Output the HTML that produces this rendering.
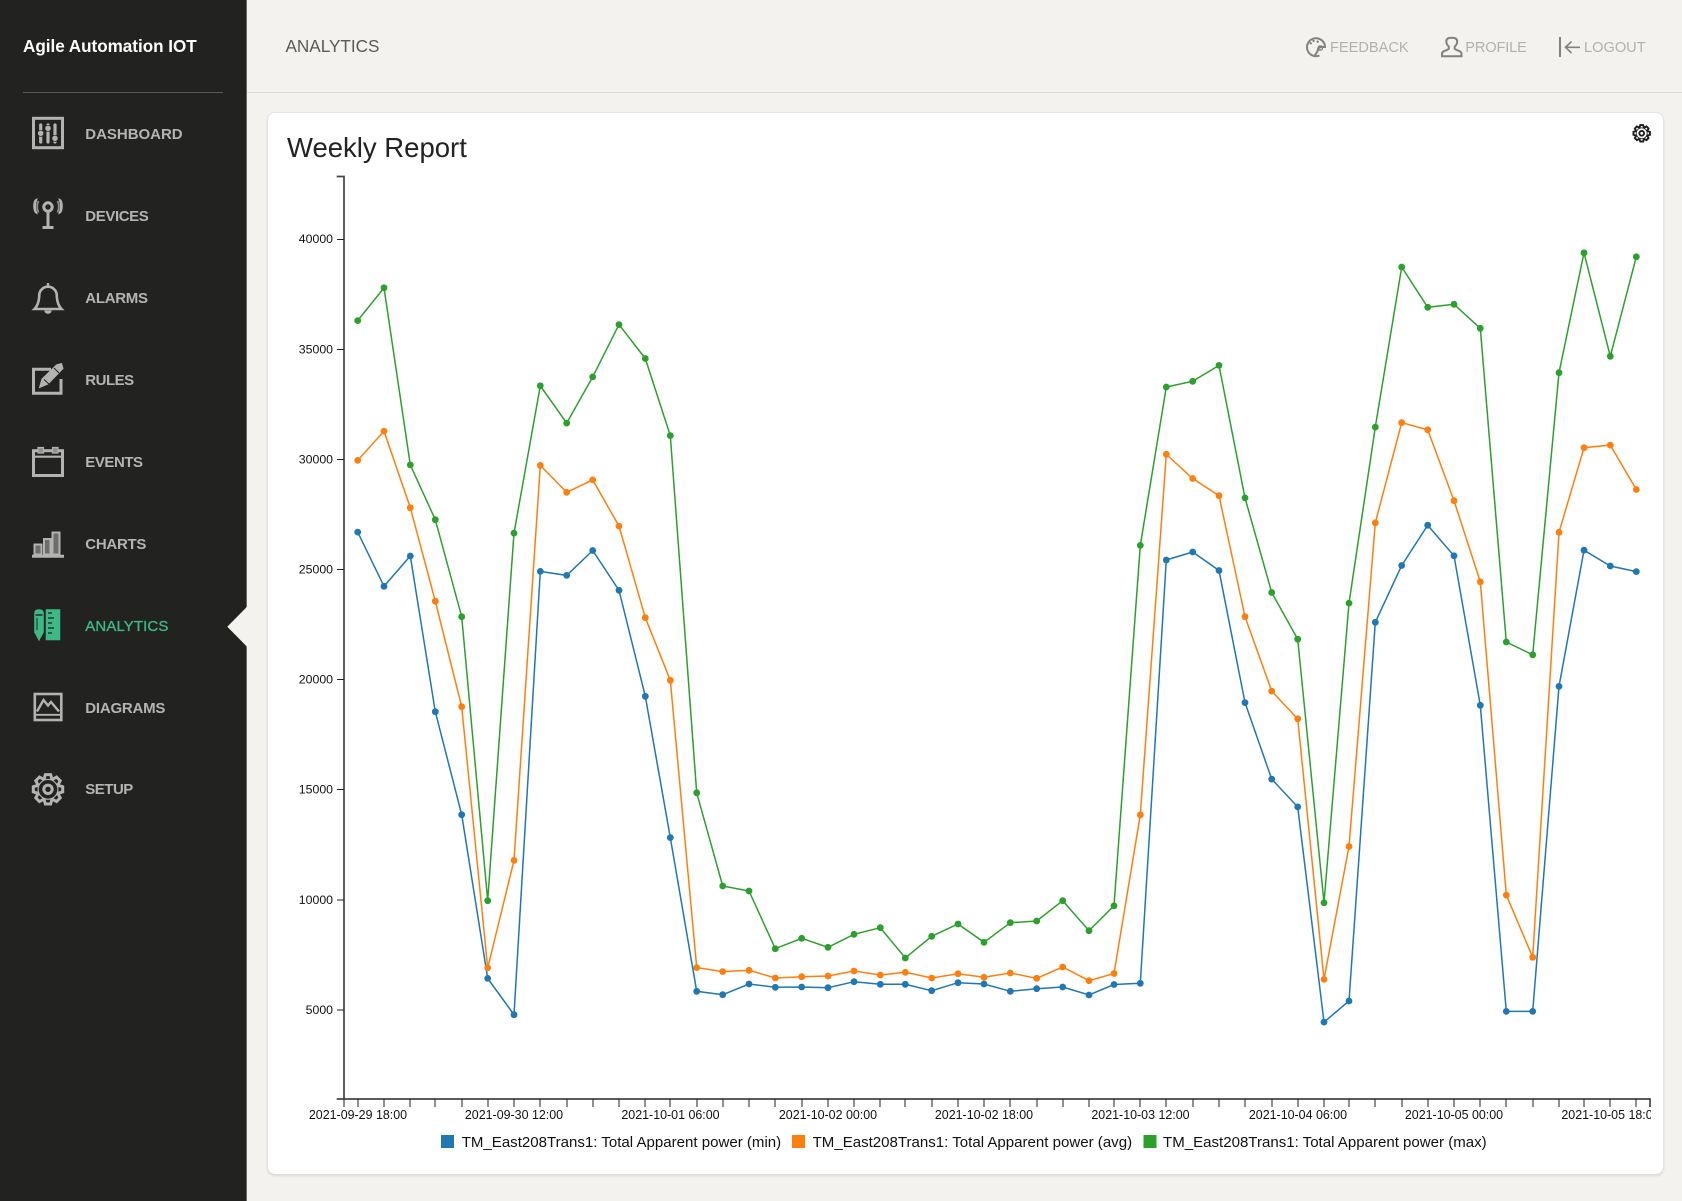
<!DOCTYPE html>
<html lang="en"><head><meta charset="utf-8"><title>Analytics</title>
<style>
*{box-sizing:border-box}
html,body{margin:0;padding:0;width:1682px;height:1201px;overflow:hidden;background:#f3f2ef;font-family:"Liberation Sans",Arial,sans-serif}
#side{position:absolute;left:0;top:0;width:247px;height:1201px;background:#222220;border-right:1px solid #6a6a68}
#logo{position:absolute;left:23px;top:36.8px;font-size:17.1px;line-height:20px;font-weight:700;color:#fff;white-space:nowrap;letter-spacing:-.02px}
#div{position:absolute;left:23px;top:92px;width:200px;height:1px;background:#5b5b59}
.nav{position:absolute;left:85.3px;font-size:15px;line-height:18px;font-weight:700;color:#b4b4b2;white-space:nowrap}
#hdr{position:absolute;left:247px;top:0;width:1435px;height:93px;border-bottom:1px solid #dcdcd9}
#ttl{position:absolute;left:285.5px;top:35.6px;font-size:17.15px;line-height:20px;color:#5a5a58;white-space:nowrap}
.top{position:absolute;top:38.6px;font-size:14.6px;line-height:18px;color:#b2b1ad;white-space:nowrap}
#card{position:absolute;left:267px;top:112px;width:1396.5px;height:1062px;background:#fff;border-radius:8px;border:1px solid #e4e4e1;border-bottom:0;box-shadow:0 2px 2px #dbdbd5}
#h{position:absolute;left:287px;top:131px;font-size:27.5px;line-height:34px;color:#222;white-space:nowrap}
svg{position:absolute;left:0;top:0}
</style></head><body>
<div id="hdr"></div>
<div id="side"></div>
<div id="logo">Agile Automation IOT</div>
<div id="div"></div>
<div class="nav" style="top:126px;letter-spacing:-.02px">DASHBOARD</div>
<div class="nav" style="top:208px;letter-spacing:-.4px">DEVICES</div>
<div class="nav" style="top:290px;letter-spacing:-.3px">ALARMS</div>
<div class="nav" style="top:372px;letter-spacing:-.5px">RULES</div>
<div class="nav" style="top:454px;letter-spacing:-.45px">EVENTS</div>
<div class="nav" style="top:536px;letter-spacing:-.28px">CHARTS</div>
<div class="nav" style="top:618px;color:#3cb984;font-weight:400;-webkit-text-stroke:.35px #3cb984;letter-spacing:.1px">ANALYTICS</div>
<div class="nav" style="top:700px;letter-spacing:-.22px">DIAGRAMS</div>
<div class="nav" style="top:781px;letter-spacing:-.5px">SETUP</div>
<div id="ttl">ANALYTICS</div>
<div class="top" style="left:1330px">FEEDBACK</div>
<div class="top" style="left:1465.3px;letter-spacing:-.15px">PROFILE</div>
<div class="top" style="left:1584px">LOGOUT</div>
<div id="card"></div>
<div id="h">Weekly Report</div>

<svg width="1682" height="1201" viewBox="0 0 1682 1201" xmlns="http://www.w3.org/2000/svg">
<defs>
<clipPath id="c"><rect x="280" y="1108" width="1371" height="24"/></clipPath>
<marker id="mb" markerUnits="userSpaceOnUse" markerWidth="8" markerHeight="8" refX="4" refY="4"><circle cx="4" cy="4" r="3.4" fill="#1f77b4"/></marker>
<marker id="mo" markerUnits="userSpaceOnUse" markerWidth="8" markerHeight="8" refX="4" refY="4"><circle cx="4" cy="4" r="3.4" fill="#ff7f0e"/></marker>
<marker id="mg" markerUnits="userSpaceOnUse" markerWidth="8" markerHeight="8" refX="4" refY="4"><circle cx="4" cy="4" r="3.4" fill="#2ca02c"/></marker>
<g id="tooth"><path d="M-3.9-10.4-2.6-14.7H2.6L3.9-10.4"/></g>
<g id="gear">
<circle r="10.8"/>
<use href="#tooth"/><use href="#tooth" transform="rotate(45)"/><use href="#tooth" transform="rotate(90)"/><use href="#tooth" transform="rotate(135)"/><use href="#tooth" transform="rotate(180)"/><use href="#tooth" transform="rotate(225)"/><use href="#tooth" transform="rotate(270)"/><use href="#tooth" transform="rotate(315)"/>
<circle r="4.2"/>
</g>
</defs>

<!-- active notch -->
<polygon points="247,606.7 227.3,626.7 247,646.7" fill="#f3f2ef"/>

<!-- sidebar icons -->
<g fill="none" stroke="#b3b3b1" stroke-width="3">
<!-- dashboard -->
<rect x="33.5" y="118.3" width="29" height="29.4"/>
<path d="M40.7 125V142M48 125V142M55 125V142" stroke-width="3.2" stroke-linecap="round"/>
<circle cx="40.7" cy="133.3" r="3.1" fill="#b3b3b1" stroke="#222220" stroke-width=".7"/>
<circle cx="48" cy="128.3" r="3.1" fill="#b3b3b1" stroke="#222220" stroke-width=".7"/>
<circle cx="55" cy="138.3" r="3.1" fill="#b3b3b1" stroke="#222220" stroke-width=".7"/>
<!-- devices -->
<circle cx="48" cy="207" r="4.2" stroke-width="3"/>
<path d="M48 211.5V228M42.5 227.5H53.5" stroke-width="3"/>
<path d="M38.5 201Q35.8 206.5 38.5 212.5M57.5 201Q60.2 206.5 57.5 212.5" stroke-width="1.8" stroke="#8f8f8d"/>
<path d="M34 206Q34 200.5 36.5 199.5Q33.8 207 36.5 213Q34 212 34 206ZM62 206Q62 200.5 59.5 199.5Q62.2 207 59.5 213Q62 212 62 206Z" stroke-width="1.6" fill="#b3b3b1"/>
<!-- alarm -->
<path d="M34.5 309Q38.5 305 39.2 297V295.5A8.8 8.8 0 0 1 56.8 295.5V297Q57.5 305 61.5 309Z" stroke-width="2.6"/>
<path d="M48 283V286.5" stroke-width="2.4"/>
<path d="M44.8 310.5A3.2 2.8 0 0 0 51.2 310.5" fill="#b3b3b1" stroke-width="1"/>
<!-- rules -->
<path d="M51 369.2H33.5V393.3H61V379"/>
<path d="M39.5 387.5 42 379 56.5 365 61.5 363.5 63 368.5 48 384Z" fill="#b3b3b1" stroke-width="1"/>
<path d="M44 379.5 50 385M54 368 59 373" stroke="#222220" stroke-width="1"/>
<!-- events -->
<rect x="33.5" y="450.7" width="29" height="24.8"/>
<path d="M33 456.7H63" stroke-width="2.2"/>
<rect x="38" y="447.5" width="5.5" height="5.5" fill="#8f8f8d" stroke-width="1.2"/>
<rect x="52.5" y="447.5" width="5.5" height="5.5" fill="#8f8f8d" stroke-width="1.2"/>
<!-- charts -->
<path d="M32 556.3H64" stroke-width="3"/>
<rect x="34.5" y="544.5" width="7" height="10" stroke-width="2" fill="#6d6d6c"/>
<rect x="44" y="539" width="6.5" height="15.5" stroke-width="2" fill="#6d6d6c"/>
<rect x="52.5" y="532.5" width="7" height="22" stroke-width="2" fill="#6d6d6c"/>
<!-- diagrams -->
<rect x="34.8" y="694" width="26.5" height="26" stroke-width="2.6"/>
<path d="M37 711.5 43.5 700 48 705.5 51 702 59 711.5" stroke-width="2.4"/>
<path d="M36 714.8H60" stroke-width="1.8"/>
</g>
<!-- analytics -->
<g fill="none" stroke="#3cb984" stroke-width="2">
<path d="M35 613Q35 610 39 610Q43 610 43 613V632L39 639.5 35 632Z" fill="#3cb984" stroke-width="1.6"/>
<path d="M35.5 615H42.5" stroke="#222220" stroke-width="1.4"/>
<path d="M37 618V630" stroke="#222220" stroke-width="1"/>
<rect x="46.5" y="610" width="13" height="29.5" fill="#3cb984" stroke-width="1.5"/>
<path d="M48 613H52M48 618H54M48 623H52M48 628H54M48 633H52" stroke="#222220" stroke-width="1.2"/>
</g>
<use href="#gear" transform="translate(48 789.3)" fill="#222220" stroke="#b3b3b1" stroke-width="3"/>

<!-- top icons -->
<g fill="none" stroke="#82817d" stroke-width="2">
<path d="M1319.5 55.5A9 9 0 1 1 1325 47H1321.5Q1317.6 47.5 1317.6 51L1314.5 56"/>
<circle cx="1310.7" cy="43.3" r="1.2" fill="#82817d" stroke="none"/>
<circle cx="1313.5" cy="40.9" r="1.2" fill="#82817d" stroke="none"/>
<circle cx="1317.7" cy="41.7" r="1.2" fill="#82817d" stroke="none"/>
<circle cx="1320.3" cy="48" r="2.2" fill="none" stroke-width="1.4"/>
<path d="M1442 56.3H1461.5V54Q1461.5 51.2 1456.5 50L1454.7 48.8V46.5Q1457.2 44.5 1457.2 41.5Q1457.2 37.8 1451.7 37.8Q1446.3 37.8 1446.3 41.5Q1446.3 44.5 1448.8 46.5V48.8L1447 50Q1442 51.2 1442 54Z"/>
<path d="M1560 37V57" stroke-width="2"/>
<path d="M1580 47.3H1565.5M1571.5 41.5 1565.5 47.3 1571.5 53" stroke-width="1.6"/>
</g>

<!-- settings gear -->
<use href="#gear" transform="translate(1641.7 133.3) scale(.56)" fill="#fff" stroke="#1d1d1d" stroke-width="3.4"/>

<!-- axes -->
<path d="M336.7 176.5H344V1099H336.7M344 1099H1650V1107" fill="none" stroke="#444" stroke-width="1.7"/>
<path shape-rendering="crispEdges" fill="none" stroke="#222" stroke-width="1" d="M344 1099V1107M358 1099V1107M384 1099V1107M410 1099V1107M435 1099V1107M462 1099V1107M488 1099V1107M514 1099V1107M540 1099V1107M567 1099V1107M593 1099V1107M619 1099V1107M645 1099V1107M670 1099V1107M697 1099V1107M723 1099V1107M749 1099V1107M775 1099V1107M802 1099V1107M828 1099V1107M854 1099V1107M880 1099V1107M905 1099V1107M932 1099V1107M958 1099V1107M984 1099V1107M1010 1099V1107M1037 1099V1107M1063 1099V1107M1089 1099V1107M1114 1099V1107M1140 1099V1107M1166 1099V1107M1193 1099V1107M1219 1099V1107M1245 1099V1107M1272 1099V1107M1298 1099V1107M1324 1099V1107M1349 1099V1107M1375 1099V1107M1402 1099V1107M1428 1099V1107M1454 1099V1107M1480 1099V1107M1506 1099V1107M1533 1099V1107M1559 1099V1107M1584 1099V1107M1610 1099V1107M1636 1099V1107M337 239.5H344M337 349.5H344M337 459.5H344M337 569.5H344M337 679.5H344M337 789.5H344M337 900H344M337 1010H344"/>

<g font-family="'Liberation Sans',Arial,sans-serif" font-size="12.3" fill="#111" text-anchor="end">
<text x="333" y="243.2">40000</text>
<text x="333" y="353.3">35000</text>
<text x="333" y="463.4">30000</text>
<text x="333" y="573.5">25000</text>
<text x="333" y="683.6">20000</text>
<text x="333" y="793.7">15000</text>
<text x="333" y="903.8">10000</text>
<text x="333" y="1013.9">5000</text>
</g>
<g clip-path="url(#c)" font-family="'Liberation Sans',Arial,sans-serif" font-size="12.45" fill="#111" text-anchor="middle">
<text x="358" y="1119">2021-09-29 18:00</text>
<text x="514" y="1119">2021-09-30 12:00</text>
<text x="670.5" y="1119">2021-10-01 06:00</text>
<text x="828" y="1119">2021-10-02 00:00</text>
<text x="984" y="1119">2021-10-02 18:00</text>
<text x="1140.5" y="1119">2021-10-03 12:00</text>
<text x="1298" y="1119">2021-10-04 06:00</text>
<text x="1454" y="1119">2021-10-05 00:00</text>
<text x="1610.5" y="1119">2021-10-05 18:00</text>
</g>

<!-- series -->
<g fill="none" stroke-width="1.5" stroke-linejoin="miter">
<polyline stroke="#1f77b4" marker-start="url(#mb)" marker-mid="url(#mb)" marker-end="url(#mb)" points="357.7,532.1 384,586.3 410.3,556 435.3,711.7 461.7,814.7 487.7,978.4 514,1014.7 540.3,571.4 566.7,575.4 592.7,550.5 619,590.3 645.3,696.3 670.3,837.6 696.7,991.3 722.7,994.7 749,984 775.3,987.3 801.7,987 828,987.7 854,981.7 880.3,984.3 905.3,984.3 931.7,990.7 958,982.7 984,984 1010.3,991.3 1036.7,988.7 1062.7,987 1089,995 1114,984.5 1140.3,983.3 1166.3,560 1192.7,552 1219,570.5 1245,702.6 1271.7,779.1 1297.7,806.9 1324,1022.1 1349,1001 1375.3,622.3 1401.7,565.5 1427.7,525.2 1454,555.8 1480.3,705.3 1506.3,1011.4 1532.7,1011.4 1559,686.4 1584,550.2 1610.3,566 1636.3,571.6"/>
<polyline stroke="#ff7f0e" marker-start="url(#mo)" marker-mid="url(#mo)" marker-end="url(#mo)" points="357.7,460.4 384,431.1 410.3,507.7 435.3,601.2 461.7,706.7 487.7,967.9 514,860.4 540.3,465.4 566.7,492.3 592.7,479.9 619,526.1 645.3,617.7 670.3,680.3 696.7,967.6 722.7,971.6 749,970.3 775.3,978 801.7,976.7 828,976 854,971 880.3,975 905.3,972.3 931.7,978 958,973.7 984,977.3 1010.3,973 1036.7,978.3 1062.7,967 1089,980.7 1114,973.5 1140.3,814.8 1166.3,454.3 1192.7,478.5 1219,495.7 1245,616.7 1271.7,691.1 1297.7,718.8 1324,979.4 1349,846.5 1375.3,522.8 1401.7,422.7 1427.7,429.8 1454,500.7 1480.3,581.8 1506.3,895.1 1532.7,957.3 1559,532.3 1584,447.7 1610.3,445.1 1636.3,489.5"/>
<polyline stroke="#2ca02c" marker-start="url(#mg)" marker-mid="url(#mg)" marker-end="url(#mg)" points="357.7,320.6 384,287.8 410.3,464.9 435.3,519.7 461.7,616.7 487.7,900.7 514,533.1 540.3,385.8 566.7,423.1 592.7,376.9 619,324.6 645.3,358.5 670.3,435.6 696.7,792.8 722.7,886 749,891 775.3,948.7 801.7,938.3 828,947.3 854,934.3 880.3,927.7 905.3,958 931.7,936.3 958,924 984,942.3 1010.3,922.7 1036.7,921 1062.7,900.7 1089,930.7 1114,905.8 1140.3,545.4 1166.3,387 1192.7,381.3 1219,365.4 1245,497.9 1271.7,592.5 1297.7,639.2 1324,902.8 1349,603.1 1375.3,427.1 1401.7,267 1427.7,307.3 1454,304.3 1480.3,328.3 1506.3,642 1532.7,654.8 1559,372.7 1584,252.8 1610.3,356.3 1636.3,256.8"/>
</g>

<!-- legend -->
<rect x="441" y="1135" width="13" height="13" fill="#1f77b4"/>
<rect x="792" y="1135" width="13" height="13" fill="#ff7f0e"/>
<rect x="1143.5" y="1135" width="13" height="13" fill="#2ca02c"/>
<g font-family="'Liberation Sans',Arial,sans-serif" font-size="15.05" fill="#111">
<text x="461.7" y="1147">TM_East208Trans1: Total Apparent power (min)</text>
<text x="812.6" y="1147">TM_East208Trans1: Total Apparent power (avg)</text>
<text x="1163" y="1147">TM_East208Trans1: Total Apparent power (max)</text>
</g>
</svg>
</body></html>
